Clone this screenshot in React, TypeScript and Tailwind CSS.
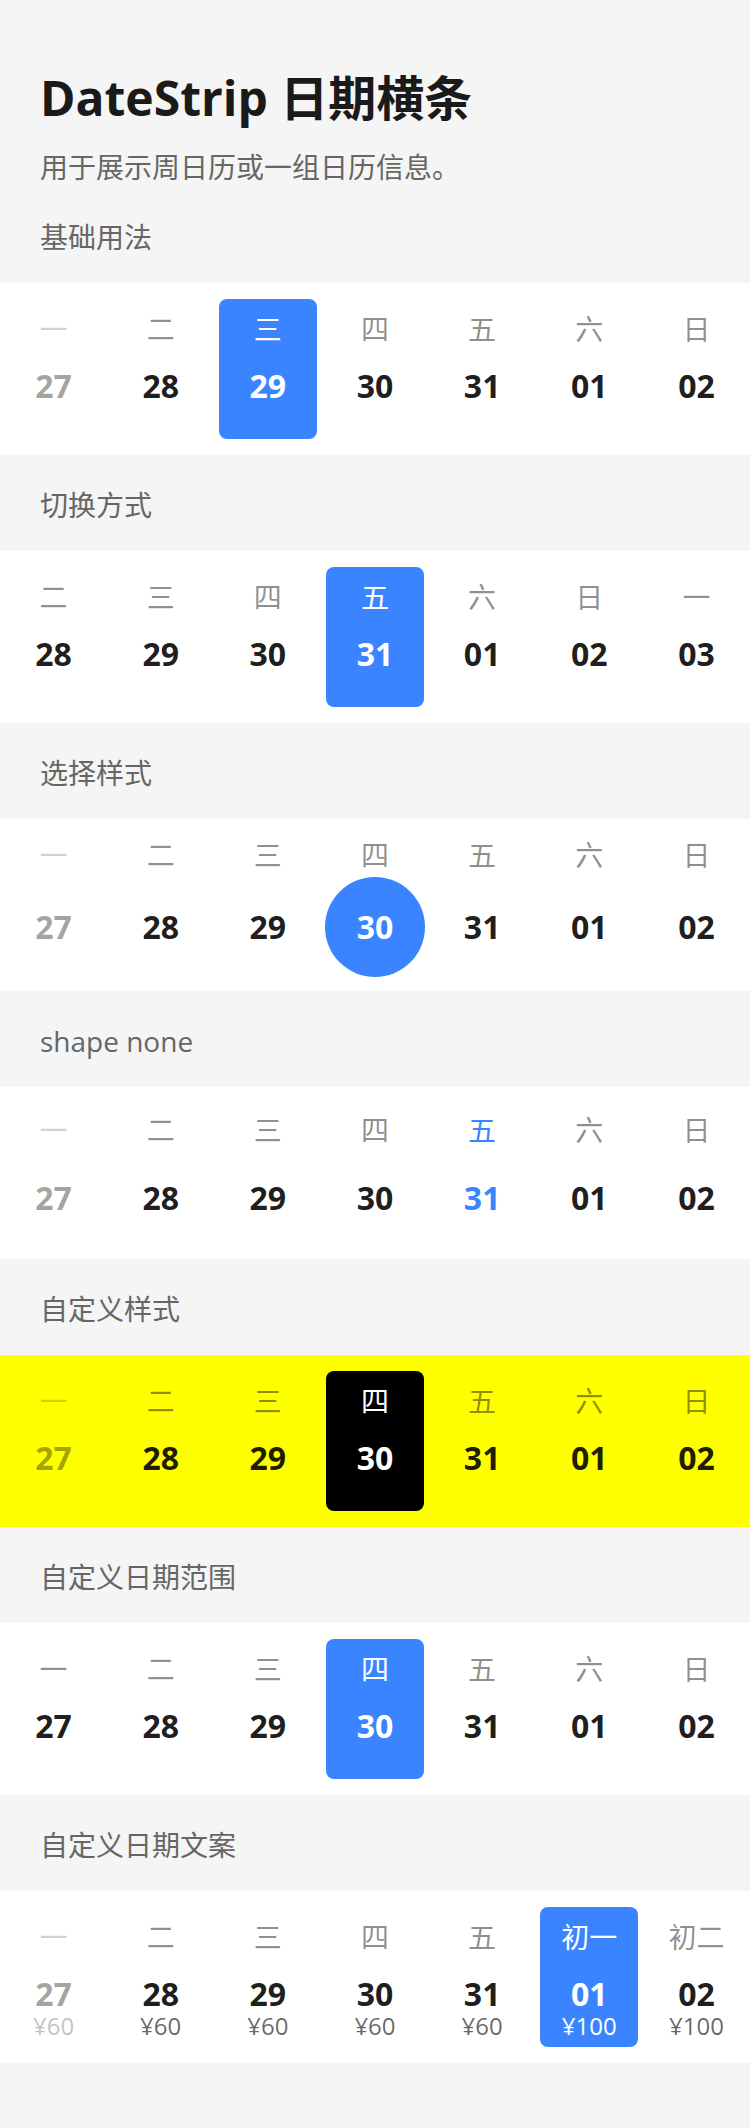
import React from 'react';

type Shape = 'square' | 'circle' | 'none';

type StripProps = {
  weeks: string[];
  dates: string[];
  bottoms?: string[];
  selected: number;
  disabled?: number[];
  shape?: Shape;
  custom?: boolean;
};

const WEEK = ['一', '二', '三', '四', '五', '六', '日'];
const DATES = ['27', '28', '29', '30', '31', '01', '02'];

// item spacing differs a bit per shape
const PAD: Record<Shape, { top: string; gap: string }> = {
  square: { top: 'pt-[10px]', gap: 'mt-[17px]' },
  circle: { top: 'pt-0', gap: 'mt-[32px]' },
  none: { top: 'pt-[7px]', gap: 'mt-[28px]' },
};

function DateStrip({ weeks, dates, bottoms, selected, disabled = [], shape = 'square', custom }: StripProps) {
  return (
    <div className={`grid h-[172px] grid-cols-7 py-4 ${custom ? 'bg-[#ffff00]' : 'bg-white'}`}>
      {weeks.map((w, i) => {
        const active = i === selected;
        const off = disabled.includes(i);
        const boxed = active && shape === 'square';
        const boxBg = boxed ? (custom ? 'bg-black' : 'bg-[#3a85ff]') : '';
        const weekColor = boxed
          ? 'text-white'
          : active && shape === 'none'
            ? 'text-[#3a85ff]'
            : 'text-[rgba(0,0,0,0.45)]';
        const dateColor = active
          ? shape === 'none'
            ? 'text-[#3a85ff]'
            : 'text-white'
          : 'text-[rgba(0,0,0,0.9)]';
        return (
          <div key={i} className="flex justify-center">
            <div
              className={`flex h-[140px] w-[98px] flex-col items-center rounded-[8px] ${PAD[shape].top} ${boxBg} ${off ? 'opacity-40' : ''}`}
            >
              <span className={`h-[40px] text-[28px] leading-[40px] ${weekColor}`}>{w}</span>
              <span className={`relative h-[40px] text-[32px] leading-[40px] font-bold ${PAD[shape].gap} ${dateColor}`}>
                {active && shape === 'circle' && (
                  <span className="absolute top-1/2 left-1/2 h-[100px] w-[100px] -translate-x-1/2 -translate-y-1/2 rounded-full bg-[#3a85ff]" />
                )}
                <span className="relative">{dates[i]}</span>
              </span>
              {bottoms && (
                <span
                  className={`h-[24px] text-[24px] leading-[24px] ${active ? 'text-white' : 'text-[rgba(0,0,0,0.6)]'}`}
                >
                  {bottoms[i]}
                </span>
              )}
            </div>
          </div>
        );
      })}
    </div>
  );
}

function Section({ title, children }: { title: string; children: React.ReactNode }) {
  return (
    <section>
      <h2 className="h-[96px] px-10 pt-[30px] text-[28px] leading-[40px] font-normal text-[#666]">{title}</h2>
      {children}
    </section>
  );
}

export default function App() {
  return (
    <div className="min-h-screen bg-[#f5f5f5] pb-16 font-['Open_Sans','Noto_Sans_CJK_SC',sans-serif]">
      <header className="px-10 pt-[72px]">
        <h1 className="text-[48px] leading-[52px] font-bold text-[#1a1a1a]">DateStrip 日期横条</h1>
        <p className="mt-[23px] text-[28px] leading-[40px] text-[#666]">用于展示周日历或一组日历信息。</p>
      </header>

      <Section title="基础用法">
        <DateStrip weeks={WEEK} dates={DATES} selected={2} disabled={[0]} />
      </Section>

      <Section title="切换方式">
        <DateStrip
          weeks={['二', '三', '四', '五', '六', '日', '一']}
          dates={['28', '29', '30', '31', '01', '02', '03']}
          selected={3}
        />
      </Section>

      <Section title="选择样式">
        <DateStrip weeks={WEEK} dates={DATES} selected={3} disabled={[0]} shape="circle" />
      </Section>

      <Section title="shape none">
        <DateStrip weeks={WEEK} dates={DATES} selected={4} disabled={[0]} shape="none" />
      </Section>

      <Section title="自定义样式">
        <DateStrip weeks={WEEK} dates={DATES} selected={3} disabled={[0]} custom />
      </Section>

      <Section title="自定义日期范围">
        <DateStrip weeks={WEEK} dates={DATES} selected={3} />
      </Section>

      <Section title="自定义日期文案">
        <DateStrip
          weeks={['一', '二', '三', '四', '五', '初一', '初二']}
          dates={DATES}
          bottoms={['¥60', '¥60', '¥60', '¥60', '¥60', '¥100', '¥100']}
          selected={5}
          disabled={[0]}
        />
      </Section>
    </div>
  );
}
